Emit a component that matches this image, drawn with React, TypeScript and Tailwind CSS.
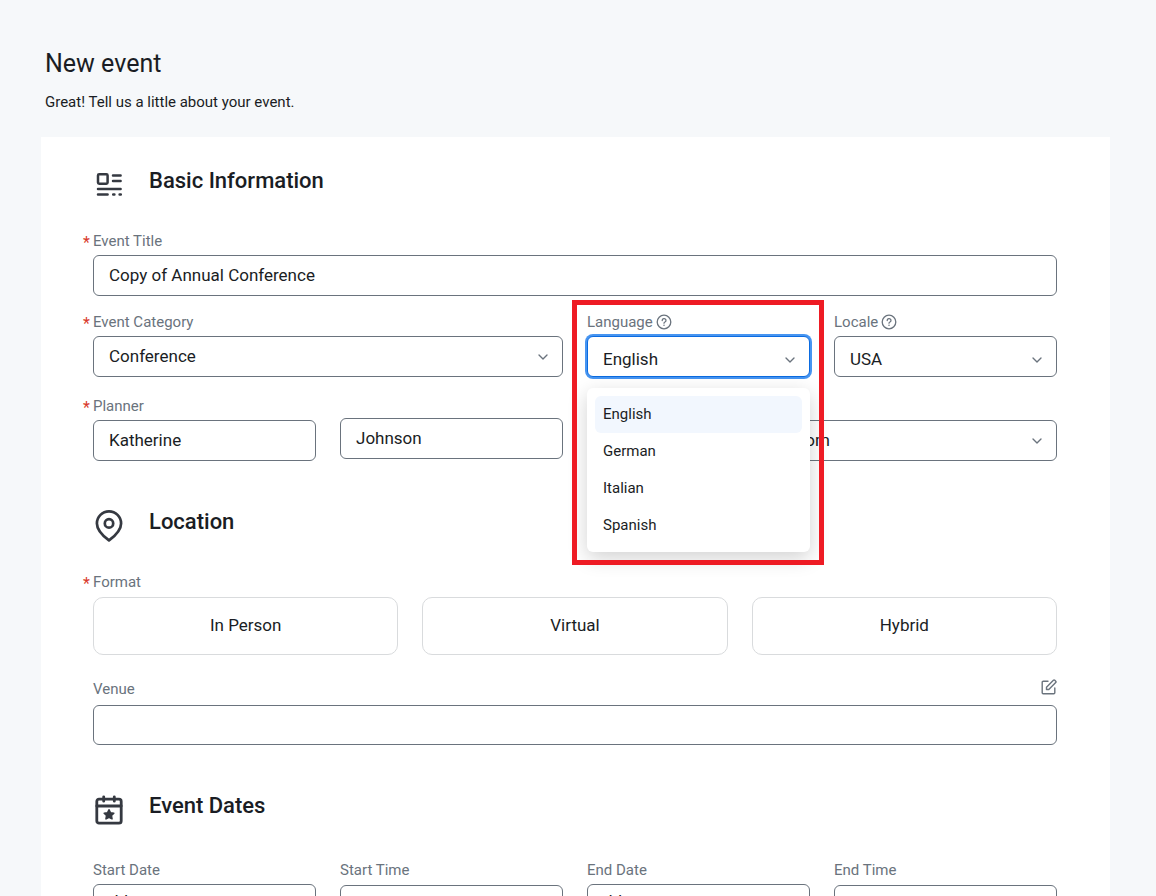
import { useState } from "react";
import type { ReactNode } from "react";
import { ChevronDown } from "lucide-react";

const languages = ["English", "German", "Italian", "Spanish"];
const formats = ["In Person", "Virtual", "Hybrid"];

const boxClass =
  "block w-full appearance-none rounded-md border border-[#6a737d] bg-white px-[15px] text-[17px] leading-6 text-[#1a1d24] outline-none";

function HelpIcon() {
  return (
    <svg className="size-4" viewBox="0 0 16 16" fill="none" stroke="currentColor" strokeWidth="1.3" strokeLinecap="round" strokeLinejoin="round">
      <circle cx="8" cy="8" r="6.8" />
      <path d="M6.2 6.5a1.9 1.8 0 1 1 2.8 1.5c-.7.4-1 .6-1 1.2" />
      <path d="M8 11.2v.1" strokeWidth="1.5" />
    </svg>
  );
}

function BasicInfoIcon() {
  return (
    <svg className="size-8" viewBox="0 0 32 32" fill="none" stroke="currentColor" strokeWidth="2.5" strokeLinecap="round">
      <rect x="5" y="5.2" width="9.6" height="9.6" rx="1.2" />
      <path d="M20 6.6h7.6M20 12h7.6M5 20h22.600M5 25.400h9.600M20.200 25.400h1.200M26.600 25.400h1.200" />
    </svg>
  );
}

function PinIcon() {
  return (
    <svg className="size-8" viewBox="0 0 32 32" fill="none" stroke="currentColor" strokeWidth="2.7" strokeLinejoin="round">
      <path d="M16 30.4C10.4 26.2 3.9 20 3.9 13.4a12.1 12 0 0 1 24.2 0C28.1 20 21.6 26.2 16 30.4Z" />
      <circle cx="16" cy="13.4" r="4.2" />
    </svg>
  );
}

function CalendarStarIcon() {
  return (
    <svg className="size-8" viewBox="0 0 32 32" fill="none" stroke="currentColor" strokeWidth="2.8" strokeLinecap="round" strokeLinejoin="round">
      <rect x="3.8" y="5.2" width="24.4" height="24" rx="2.2" />
      <path d="M3.8 12h24.4M10.7 2.8v4.4M21.3 2.8v4.4" />
      <path
        d="m16 15.8 1.5 3 3.3.4-2.4 2.3.6 3.3-3-1.6-3 1.6.6-3.3-2.4-2.3 3.3-.4Z"
        fill="currentColor"
        strokeWidth="1.6"
      />
    </svg>
  );
}

function EditIcon() {
  return (
    <svg className="size-4" viewBox="0 0 16 16" fill="none" stroke="currentColor" strokeWidth="1.4" strokeLinecap="round" strokeLinejoin="round">
      <path d="M7 2.2H2.2a1 1 0 0 0-1 1v10.600a1 1 0 0 0 1 1h10.600a1 1 0 0 0 1-1V9" />
      <path d="M5.5 8.200 12.400 1.300a1 1 0 0 1 1.400 0l.9.9a1 1 0 0 1 0 1.400L7.800 10.500H5.500Z" />
    </svg>
  );
}

function SectionHeading({ icon, title }: { icon: ReactNode; title: string }) {
  return (
    <div className="flex items-start gap-6 text-[#353941]">
      <span className="pt-0.5">{icon}</span>
      <h2 className="text-[22px] leading-7 font-medium text-[#1a1d24]">{title}</h2>
    </div>
  );
}

type LabelProps = { htmlFor: string; text: string; required?: boolean; help?: boolean };

function FieldLabel({ htmlFor, text, required, help }: LabelProps) {
  return (
    <label htmlFor={htmlFor} className={`flex h-5 items-center text-[15px] leading-5 text-[#6a737d] ${required ? "-ml-2.5" : ""}`}>
      {required && <span className="w-2.5 pt-1 text-base text-[#d93a2b]">*</span>}
      {text}
      {help && <span className="ml-[3px]"><HelpIcon /></span>}
    </label>
  );
}

type SelectProps = { id: string; options: string[]; className?: string; iconClassName?: string; label?: string };

function SelectBox({ id, options, className = "pb-0.5", iconClassName = "top-[13px]", label }: SelectProps) {
  return (
    <div className="relative">
      <select id={id} aria-label={label} className={`${boxClass} h-[41px] ${className}`}>
        {options.map((o) => (
          <option key={o}>{o}</option>
        ))}
      </select>
      <ChevronDown className={`pointer-events-none absolute right-3 size-4 text-[#6a737d] ${iconClassName}`} strokeWidth={2} />
    </div>
  );
}

function LanguageField() {
  const [language, setLanguage] = useState("English");

  return (
    <div className="relative z-10 flex flex-col gap-1">
      <FieldLabel htmlFor="language" text="Language" help />
      <div className="relative">
        <select
          id="language"
          value={language}
          onChange={(e) => setLanguage(e.target.value)}
          className="block h-[41px] w-full appearance-none rounded-md border border-[#0b6be0] bg-white px-[15px] pt-1 text-[17px] leading-6 text-[#1a1d24] ring-2 ring-[#4795f1] outline-none"
        >
          {languages.map((l) => (
            <option key={l}>{l}</option>
          ))}
        </select>
        <ChevronDown className="pointer-events-none absolute top-4 right-3 size-4 text-[#6a737d]" strokeWidth={2} />
      </div>
      <ul className="absolute top-[76px] w-full rounded-md bg-white p-2 shadow-[0_6px_20px_rgba(0,0,0,0.18)]">
        {languages.map((l) => (
          <li key={l}>
            <button
              type="button"
              onClick={() => setLanguage(l)}
              className={`block h-[37px] w-full rounded-md px-2 pb-0.5 text-left text-[15px] leading-5 text-[#1a1d24] ${l === language ? "bg-[#f2f7fe]" : ""}`}
            >
              {l}
            </button>
          </li>
        ))}
      </ul>
      {/* highlight frame */}
      <div className="pointer-events-none absolute -top-3 -right-3.5 -left-[15px] h-[265px] border-5 border-[#ee1b24]" />
    </div>
  );
}

export default function App() {
  return (
    <main className="h-screen overflow-hidden bg-[#f6f8fa] pt-12 pr-[46px] pl-[41px] font-['Roboto','Liberation_Sans',sans-serif] text-[#1a1d24]">
      <header className="px-1 pb-6">
        <h1 className="text-[25px] leading-8">New event</h1>
        <p className="pt-3 text-[15px] leading-[21px]">Great! Tell us a little about your event.</p>
      </header>

      <form className="bg-white pt-[30px] pr-[53px] pb-12 pl-[52px]">
        <section>
          <SectionHeading icon={<BasicInfoIcon />} title="Basic Information" />
          <div className="grid grid-cols-4 gap-x-6 pt-[30px]">
            <div className="col-span-4 flex flex-col gap-1 pb-4">
              <FieldLabel htmlFor="title" text="Event Title" required />
              <input id="title" defaultValue="Copy of Annual Conference" className={`${boxClass} h-[41px] pb-0.5`} />
            </div>
            <div className="col-span-2 flex flex-col gap-1 pb-[19px]">
              <FieldLabel htmlFor="category" text="Event Category" required />
              <SelectBox id="category" options={["Conference"]} />
            </div>
            <LanguageField />
            <div className="flex flex-col gap-1">
              <FieldLabel htmlFor="locale" text="Locale" help />
              <SelectBox id="locale" options={["USA"]} className="pt-1" iconClassName="top-4" />
            </div>
            <div className="flex flex-col gap-1">
              <FieldLabel htmlFor="first-name" text="Planner" required />
              <input id="first-name" defaultValue="Katherine" className={`${boxClass} h-[41px] pb-0.5`} />
            </div>
            <div className="pt-[22px]">
              <input aria-label="Last name" defaultValue="Johnson" className={`${boxClass} h-[41px] pb-0.5`} />
            </div>
            <div className="col-span-2 pt-6">
              <SelectBox id="email" label="Planner email" options={["katherine.johnson@team.com"]} />
            </div>
          </div>
        </section>

        <section className="pt-[47px]">
          <SectionHeading icon={<PinIcon />} title="Location" />
          <div className="flex flex-col gap-[5px] pt-[30px]">
            <FieldLabel htmlFor="format-0" text="Format" required />
            <div className="grid grid-cols-3 gap-6">
              {formats.map((f, i) => (
                <button
                  key={f}
                  id={`format-${i}`}
                  type="button"
                  className="h-[58px] rounded-[10px] border border-[#d9dbdd] pb-0.5 text-[17px] leading-6"
                >
                  {f}
                </button>
              ))}
            </div>
          </div>
          <div className="flex flex-col gap-1.5 pt-6">
            <div className="flex items-start justify-between">
              <FieldLabel htmlFor="venue" text="Venue" />
              <button type="button" aria-label="Edit venue" className="text-[#6a737d]">
                <EditIcon />
              </button>
            </div>
            <input id="venue" className={`${boxClass} h-10`} />
          </div>
        </section>

        <section className="pt-[47px]">
          <SectionHeading icon={<CalendarStarIcon />} title="Event Dates" />
          <div className="grid grid-cols-4 gap-6 pt-[34px]">
            <div className="flex flex-col gap-1">
              <FieldLabel htmlFor="start-date" text="Start Date" />
              <input id="start-date" placeholder="dd-mm-yyyy" className={`${boxClass} h-[41px] pb-2 placeholder:text-[#1a1d24]`} />
            </div>
            <div className="flex flex-col gap-[5px]">
              <FieldLabel htmlFor="start-time" text="Start Time" />
              <input id="start-time" className={`${boxClass} h-[41px]`} />
            </div>
            <div className="flex flex-col gap-1">
              <FieldLabel htmlFor="end-date" text="End Date" />
              <input id="end-date" placeholder="dd-mm-yyyy" className={`${boxClass} h-[41px] pb-2 placeholder:text-[#1a1d24]`} />
            </div>
            <div className="flex flex-col gap-[5px]">
              <FieldLabel htmlFor="end-time" text="End Time" />
              <input id="end-time" className={`${boxClass} h-[41px]`} />
            </div>
          </div>
        </section>
      </form>
    </main>
  );
}
